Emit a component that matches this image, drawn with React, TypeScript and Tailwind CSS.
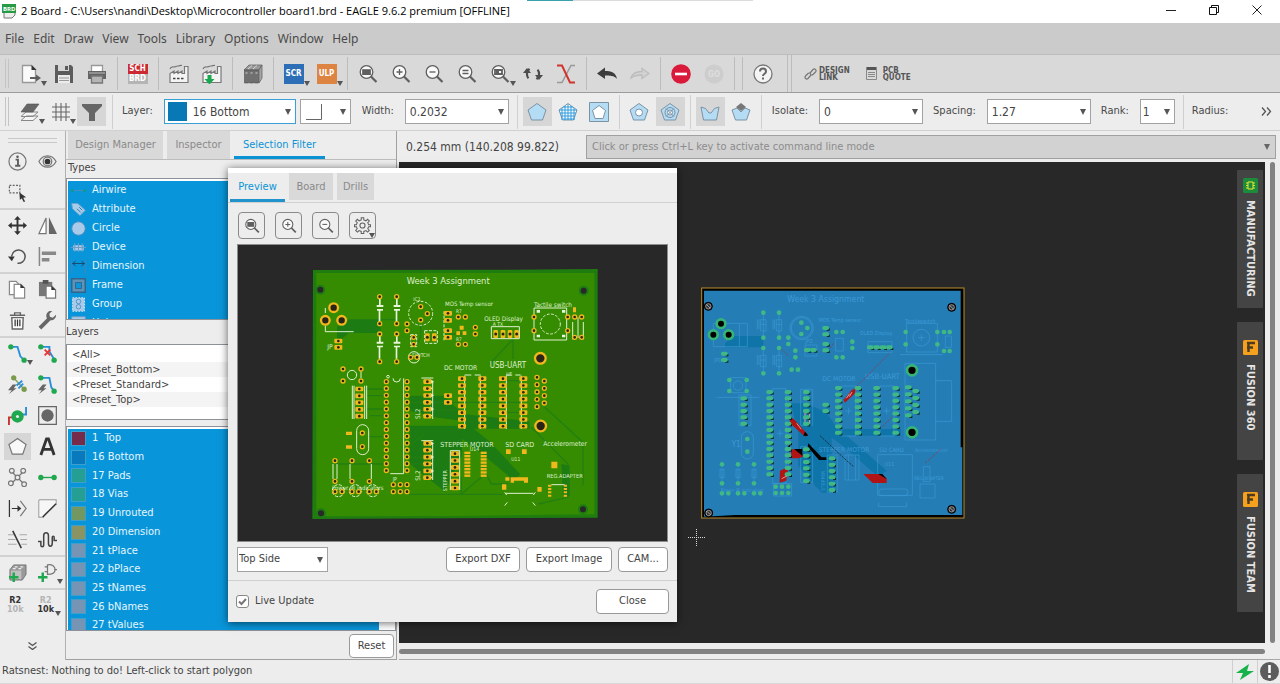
import React from "react";

type Kids = { children?: React.ReactNode };

const Ico = ({ children, s = 20 }: Kids & { s?: number }) => (
  <svg width={s} height={s} viewBox="0 0 20 20" fill="none" stroke="#5f5f5f" strokeWidth="1.3" className="shrink-0">
    {children}
  </svg>
);

const Tri = () => (
  <svg width="6" height="5" viewBox="0 0 6 5" className="pointer-events-none absolute right-0 bottom-1">
    <path d="M0 0h6L3 5z" fill="#555" />
  </svg>
);

/* ---------- shared icons ---------- */

const Lens = ({ children, s = 20 }: Kids & { s?: number }) => (
  <Ico s={s}>
    <circle cx="8.5" cy="8" r="6.3" fill="#fafafa" />
    <path d="M13 12.5l5.5 5.5" strokeWidth="2.2" />
    {children}
  </Ico>
);
const lensFit = <path d="M4.8 5.8h7.4v4.6H4.8z" fill="#5f5f5f" />;
const lensPlus = <path d="M5.5 8h6M8.5 5v6" />;
const lensMinus = <path d="M5.5 8h6" />;

const SheetIcon = () => (
  <Ico>
    <path d="M1.5 1.5h9l4 4v13h-13z" fill="#fafafa" stroke="#999" />
    <path d="M10.500 1v5h5z" fill="#333" stroke="none" />
    <path d="M9 14h6" strokeWidth="2" />
    <path d="M15 10.500l5 3.500-5 3.500z" fill="#5f5f5f" stroke="none" />
  </Ico>
);
const SaveIcon = () => (
  <Ico>
    <path d="M1 1h16l2 2v16H1z" fill="#5c5c5c" stroke="none" />
    <path d="M4 1h11v6H4z" fill="#d5d5d5" stroke="none" />
    <path d="M11 2h3v4h-3z" fill="#5c5c5c" stroke="none" />
    <path d="M4 11h12v8H4z" fill="#ececec" stroke="none" />
    <path d="M5 14h10M5 16.5h10" stroke="#999" strokeWidth="1" />
  </Ico>
);
const PrintIcon = () => (
  <Ico>
    <path d="M4.5 1.500h11v7h-11z" fill="#fff" stroke="#999" />
    <path d="M1 7h18v8H1z" fill="#646464" stroke="none" />
    <path d="M2 9h16" stroke="#aaa" />
    <path d="M4.500 12h11v7h-11z" fill="#b5b5b5" stroke="#777" />
  </Ico>
);
const Tag = ({ top, bottom, color }: { top: string; bottom?: string; color: string }) => (
  <span className={"flex size-5 flex-col items-center justify-center text-[8px] leading-[10px] font-bold text-white " + color}>
    <span>{top}</span>
    {bottom && <span className="w-full bg-[#b5b5b5] text-center">{bottom}</span>}
  </span>
);
const Factory = ({ green }: { green?: boolean }) => (
  <Ico>
    <path d="M1 18.500V9.500L5 7v2.500L9 7v2.500L13 7v2.500h2.500V2.500H19v16z" fill="#f4f4f4" stroke="#777" strokeWidth="1.200" />
    <path d="M1 5c1-3 3-2 4-2s2-1 4-1 2-1 4-.5" stroke="#777" strokeWidth="1.100" />
    {green ? (
      <path d="M5.500 11h4v4h3l-5 5.500-5-5.500h3z" fill="#18a850" stroke="none" />
    ) : (
      <path d="M4 14.500h2.500m1.500 0h2.500m1.500 0h2.500" stroke="#444" strokeWidth="1.600" />
    )}
  </Ico>
);
const Books = () => (
  <Ico>
    <path d="M1 6l5-5h13l-3 5z" fill="#999" stroke="#666" strokeWidth=".8" />
    <path d="M1.500 6H5.500v13H1.500zM6.500 6h4v13h-4zM11.500 6h4v13h-4z" fill="#707070" stroke="#4a4a4a" strokeWidth=".6" />
    <path d="M16 6l3-5v13l-3 5z" fill="#a5a5a5" stroke="#666" strokeWidth=".8" />
    <path d="M2.500 9h2M7.500 9h2M12.500 9h2M5 5l4-3.500M10 5l4-3.500" stroke="#ddd" strokeWidth=".9" />
  </Ico>
);
const Refresh = () => (
  <Ico>
    <path d="M4 12a6.500 6.500 0 0 1 5-8M16 8a6.500 6.500 0 0 1-5 8" strokeWidth="2.200" stroke="#4d4d4d" transform="rotate(-25 10 10)" />
    <path d="M0 9h8l-4-5zM12 11h8l-4 5z" fill="#4d4d4d" stroke="none" />
  </Ico>
);
const RatsIcon = () => (
  <Ico>
    <path d="M19 1.500h-4L6 18.500H1" stroke="#999" strokeWidth="1.500" />
    <path d="M1 1.500h5l8 17h5" stroke="#d0342c" strokeWidth="2" />
  </Ico>
);
const Undo = ({ redo }: { redo?: boolean }) => (
  <Ico>
    {redo ? (
      <path d="M19 9.500l-7-5v3C6 7.500 2 10 1 14c3-2.500 6-3 11-3v3.500z" stroke="#bdbdbd" fill="#d2d2d2" />
    ) : (
      <path d="M0 9.500l8-6v3.500c6 0 11 1.500 12 8-3-3.500-7-3.500-12-3.500v3.500z" fill="#3c3c3c" stroke="none" />
    )}
  </Ico>
);

/* ---------- top bars ---------- */

const TB = ({ label, drop, narrow, children }: Kids & { label: string; drop?: boolean; narrow?: boolean }) => (
  <button aria-label={label} className={"relative flex h-full shrink-0 items-center justify-center " + (narrow ? "w-[31px]" : "w-[33px]")}>
    {children}
    {drop && (
      <svg width="6" height="5" viewBox="0 0 6 5" className="absolute right-0 bottom-1.5">
        <path d="M0 0h6L3 5z" fill="#555" />
      </svg>
    )}
  </button>
);
const Sep = () => (
  <span className="flex h-full w-2 shrink-0 justify-center py-0.5">
    <span className="w-px bg-[#bcbcbc]" />
  </span>
);
const Grip = () => <span className="mx-[5px] my-1 w-1 shrink-0 self-stretch border-x border-[#c4c4c4]" />;

function TitleBar() {
  return (
    <header className="relative flex h-[23px] shrink-0 items-center bg-white pb-px font-['Open_Sans',sans-serif] text-[11px] text-black">
      <svg width="16" height="16" viewBox="0 0 16 16" className="mr-[3px] ml-0.5">
        <path d="M2 9v6h8l3-3V8z" fill="#eee" stroke="#777" />
        <path d="M0 1h14v9H0z" fill="#279a45" />
        <text x="1" y="8" fontSize="6" fontWeight="bold" fill="#fff">BRD</text>
      </svg>
      <h1>2 Board - C:\Users\nandi\Desktop\Microcontroller board1.brd - EAGLE 9.6.2 premium [OFFLINE]</h1>
      <span className="absolute top-0 left-[527px] h-px w-[46px] bg-[#3aa0ac]" />
      <span className="absolute top-0 left-[573px] h-px w-[180px] bg-[#dcdcdc]" />
      <div className="mr-0.5 ml-auto flex pb-0.5">
        <button aria-label="Minimize" className="flex w-[43px] justify-center">
          <svg width="10" height="10"><path d="M0 5.500h10" stroke="#222" /></svg>
        </button>
        <button aria-label="Restore" className="flex w-[43px] justify-center">
          <svg width="10" height="10" fill="none" stroke="#111"><path d="M.5 2.500h7v7h-7zM2.500 2.500v-2h7v7h-2" /></svg>
        </button>
        <button aria-label="Close window" className="flex w-[43px] justify-center">
          <svg width="10" height="10"><path d="M.5.5l9 9m0-9l-9 9" stroke="#222" /></svg>
        </button>
      </div>
    </header>
  );
}

function MenuBar() {
  const items = ["File", "Edit", "Draw", "View", "Tools", "Library", "Options", "Window", "Help"];
  return (
    <nav className="flex h-8 shrink-0 items-center gap-[9px] border-b border-[#bcbcbc] bg-[#cbcbcb] px-[5px] font-['Noto_Sans',sans-serif] text-[12px] text-[#4a4a4a]">
      {items.map((m) => (
        <button key={m}>{m}</button>
      ))}
    </nav>
  );
}

function MainToolbar() {
  return (
    <div className="flex h-[38px] shrink-0 items-center border-b border-[#9c9c9c] bg-[#d9d9d9]">
      <Grip />
      <TB label="Open" drop><SheetIcon /></TB>
      <TB label="Save"><SaveIcon /></TB>
      <TB label="Print"><PrintIcon /></TB>
      <Sep />
      <TB label="Schematic"><Tag top="SCH" bottom="BRD" color="bg-[#cc2a32]" /></TB>
      <Sep />
      <TB label="CAM processor"><Factory /></TB>
      <TB label="Manufacturing export"><Factory green /></TB>
      <Sep />
      <TB label="Library manager"><Books /></TB>
      <Sep />
      <TB label="Run script" drop><Tag top="SCR" color="bg-[#2d6fb7]" /></TB>
      <TB label="Run ULP" drop><Tag top="ULP" color="bg-[#dd8442]" /></TB>
      <Sep />
      <TB label="Zoom to fit"><Lens>{lensFit}</Lens></TB>
      <TB label="Zoom in"><Lens>{lensPlus}</Lens></TB>
      <TB label="Zoom out"><Lens>{lensMinus}</Lens></TB>
      <TB label="Redraw"><Lens><path d="M5.500 6.500h6m-6 3h6" /></Lens></TB>
      <TB label="Zoom select" drop><Lens><path d="M5 6h7v4H5zM6 8h3" strokeWidth="1.800" /></Lens></TB>
      <TB label="Refresh"><Refresh /></TB>
      <TB label="Ripup"><RatsIcon /></TB>
      <Sep />
      <TB label="Undo"><Undo /></TB>
      <TB label="Redo"><Undo redo /></TB>
      <Sep />
      <TB label="Stop">
        <Ico><circle cx="10" cy="10" r="9.800" fill="#da1a3a" stroke="none" /><path d="M4 10h12" stroke="#fff" strokeWidth="2.600" /></Ico>
      </TB>
      <TB label="Go">
        <Ico><circle cx="10" cy="10" r="9.500" fill="#cdcdcd" stroke="none" /><text x="4" y="13" fontSize="8" fontWeight="bold" fill="#dedede" stroke="none">GO</text></Ico>
      </TB>
      <Sep />
      <Sep />
      <TB label="Help">
        <Ico><circle cx="10" cy="10" r="9" fill="#f4f4f4" stroke="#777" /><path d="M7 7.500c0-4 6-4 6 0 0 2.500-3 2-3 4.500M10 13.500v2" stroke="#666" strokeWidth="2" /></Ico>
      </TB>
      <span className="mx-2 h-full w-[5px] shrink-0 border-x border-[#bcbcbc]" />
      <button className="ml-1 flex items-center gap-0.5 text-left text-[8px] leading-[7px] font-bold text-[#555]">
        <svg width="13" height="12" viewBox="0 0 13 12" fill="none" stroke="#777" strokeWidth="1.200">
          <path d="M6 5l3-3.500c2-1.500 4 1 2.500 2.500L9 6.500c-1 1-2 .5-3 0M7 7L4 10.500C2.500 12 0 10 1.500 8L4 5.500c1-1 2-.5 3 0" />
        </svg>
        <span>DESIGN<br />LINK</span>
      </button>
      <button className="ml-4 flex items-center gap-1.5 text-left text-[8px] leading-[7px] font-bold text-[#555]">
        <svg width="11" height="13" fill="none" stroke="#888"><path d="M0 1.500h11" strokeWidth="3" stroke="#555" /><path d="M.5 0v12.500h10V0M2 5.500h7m-7 2h7m-7 2h7" /></svg>
        <span>PCB<br />QUOTE</span>
      </button>
    </div>
  );
}

type PickProps = { label?: string; value: string; box: string; hidden?: string; kids?: React.ReactNode };
const Pick = ({ label, value, box, hidden, kids }: PickProps) => {
  const id = React.useId();
  return (
    <div className="flex shrink-0 items-center gap-[11px]">
      {label && <label htmlFor={id}>{label}</label>}
      <span className="relative flex items-center">
        {kids}
        <select id={id} aria-label={hidden} className={"h-[25px] appearance-none border bg-white text-[#444] outline-none " + box}>
          <option>{value}</option>
        </select>
        <svg width="6" height="6" viewBox="0 0 6 6" className="pointer-events-none absolute right-[5px]"><path d="M0 0h6L3 6z" fill="#555" /></svg>
      </span>
    </div>
  );
};

const PENTA = "M10 1.500l9 6.500-3.500 10h-11L1 8z";
const PB = ({ label, on, children }: Kids & { label: string; on?: boolean }) => (
  <button aria-label={label} className={"flex h-[29px] w-[29px] shrink-0 items-center justify-center " + (on ? "bg-[#d6d6d6]" : "")}>
    <svg width="20" height="20" viewBox="0 0 20 20" fill="#b5dcf5" stroke="#7c93a3">{children}</svg>
  </button>
);
const Bar = () => <span className="block h-[34px] w-px shrink-0 bg-[#cfcfcf]" />;

function ParamBar() {
  return (
    <div className="flex h-[38px] shrink-0 items-center overflow-hidden border-b border-[#d0d0d0] bg-[#ededed] text-[11px] text-[#4a4a4a]">
      <Grip />
      <TB label="Layer settings" drop narrow>
        <Ico>
          <path d="M1 18.500l5-4.500h12l-5 4.500zM1 14.500L6 10h12l-5 4.500z" fill="#f4f4f4" stroke="#888" strokeWidth="1" />
          <path d="M1 10l6-8h12l-6 8z" fill="#666" stroke="#555" strokeWidth=".6" />
        </Ico>
      </TB>
      <TB label="Grid" drop narrow>
        <Ico><path d="M5 1v18M10 1v18M15 1v18M1 5h18M1 10h18M1 15h18" stroke="#666" strokeWidth="1.100" /></Ico>
      </TB>
      <button aria-label="Selection filter" className="ml-px flex h-[29px] w-[29px] shrink-0 items-center justify-center bg-[#d6d6d6]">
        <Ico><path d="M0 2h20v2l-7 7v8H7v-8L0 4z" fill="#666" stroke="none" /></Ico>
      </button>
      <span className="mx-[6px]"><Bar /></span>
      <div className="flex items-center gap-1 pl-[3px]">
        <Pick
          label="Layer:"
          value="16 Bottom"
          box="w-[132px] border-[#3a9fd6] pl-7 text-[12px]"
          kids={<span className="pointer-events-none absolute left-1 size-[19px] bg-[#0879b4]" />}
        />
        <Pick
          hidden="Wire bend style"
          value=""
          box="w-[51px] border-[#a2a2a2]"
          kids={<svg width="18" height="16" className="pointer-events-none absolute left-1.5" fill="none" stroke="#666"><path d="M0 15.500h15.500V0" /></svg>}
        />
      </div>
      <div className="pr-2 pl-[11px]"><Pick label="Width:" value="0.2032" box="w-[104px] border-[#a2a2a2] pl-1 text-[12px]" /></div>
      <Bar />
      <div className="flex items-center gap-0.5 px-[5px]">
        <PB label="Solid pour" on><path d={PENTA} /></PB>
        <PB label="Hatch pour">
          <path d={PENTA} fill="#fff" />
          <path d="M4 6v12M7 4v14M10 2v16M13 4v14M16 6v12M1 8h18M2 11h16M3 14h14M5 17h11M5 5h10" stroke="#2d9be0" />
        </PB>
        <PB label="Cutout pour"><path d="M.5.500h19v19H.5z" /><path d="M10 3.500l6.500 5-2.500 8H6L3.500 8.500z" fill="#fff" /></PB>
      </div>
      <Bar />
      <div className="flex items-center gap-0.5 px-[5px]">
        <PB label="Thermals off"><path d={PENTA} /><circle cx="10" cy="10.500" r="3.500" fill="#fff" /></PB>
        <PB label="Thermals on" on>
          <path d={PENTA} /><circle cx="10" cy="10.500" r="5" fill="none" stroke="#7890a0" /><circle cx="10" cy="10.500" r="2.500" fill="#fff" />
          <path d="M6 6.500l8 8m0-8l-8 8" />
        </PB>
      </div>
      <Bar />
      <div className="flex items-center gap-0.5 px-[5px]">
        <PB label="Orphans off" on><path d="M1 5l4.500 1.500L9 11h2l3.500-4.500L19 5l-2.500 13h-13z" /></PB>
        <PB label="Orphans on"><path d="M1 8l5-2 4 4 4-4 5 2-3.500 10h-11z" /><path d="M10 1l5 4-5 4-5-4z" fill="#777" stroke="none" /></PB>
      </div>
      <Bar />
      <div className="flex items-center gap-2.5 pr-2 pl-2.5">
        <Pick label="Isolate:" value="0" box="w-[104px] border-[#a2a2a2] pl-1 text-[12px]" />
        <Pick label="Spacing:" value="1.27" box="w-[104px] border-[#a2a2a2] pl-1 text-[12px]" />
        <Pick label="Rank:" value="1" box="w-[35px] border-[#a2a2a2] pl-0.5 text-[12px]" />
      </div>
      <Bar />
      <span className="ml-2">Radius:</span>
      <button aria-label="More" className="mr-2 ml-auto">
        <svg width="11" height="9" fill="none" stroke="#555" strokeWidth="1.300"><path d="M1 .5l3.500 4-3.500 4M6 .5l3.500 4-3.500 4" /></svg>
      </button>
    </div>
  );
}

/* ---------- left tool palette ---------- */

const G = "#1fa84e";
const B = "#2a8fd8";
const dot = (x: number, y: number, c = G) => <circle key={x + "-" + y} cx={x} cy={y} r="2.800" fill={c} stroke="none" />;
const bolt = <path d="M5 10L0 16h4l-3 4 8-6H6l3-4z" fill="#666" stroke="none" />;

const tools: ([string, React.ReactNode, number?] | null)[][] = [
  [
    ["Info", <><circle cx="10" cy="10" r="9" stroke="#777" /><path d="M8 8h2.500v6M7.500 14.500h5.500" strokeWidth="2" /><circle cx="10" cy="5" r="1.300" fill="#555" stroke="none" /></>],
    ["Show", <><path d="M1 10c4-8 14-8 18 0-4 8-14 8-18 0z" stroke="#777" /><circle cx="10" cy="10" r="4.500" stroke="#777" /><circle cx="10" cy="10" r="3" fill="#333" stroke="none" /></>],
    ["Group", <><path d="M1.500 2.500h11v8h-11z" strokeDasharray="2 1.500" /><path d="M12 10l7 5-3 .5 2 4-1.500.5-2-4-2 2z" fill="#333" stroke="none" /></>],
    null,
  ],
  [
    ["Move", <><path d="M10 3v14M3 10h14" stroke="#333" strokeWidth="2" /><path d="M10 0l3.500 4h-7zM10 20l3.500-4h-7zM0 10l4-3.500v7zM20 10l-4-3.500v7z" fill="#333" stroke="none" /></>],
    ["Mirror", <><path d="M8.500 2v16.500H1z" fill="#fff" stroke="#777" /><path d="M11.500 1v18H20z" fill="#666" stroke="none" /></>],
    ["Rotate", <><path d="M4 10a7 7 0 1 1 6 7" stroke="#555" strokeWidth="1.600" /><path d="M0 10h7l-3 5z" fill="#333" stroke="none" /></>],
    ["Align", <><path d="M1.500 0v20" stroke="#888" strokeWidth="1.600" /><path d="M4 6.500h15M4 13.500h8" stroke="#888" strokeWidth="3.600" /></>],
  ],
  [
    ["Copy", <><path d="M1.500 1.500h7l3 3v11h-10z" fill="#fff" stroke="#888" /><path d="M6.500 4.500h7l4 4v10.500h-11z" fill="#fff" stroke="#888" /><path d="M13 4v4.500h4.500z" fill="#333" stroke="none" /></>],
    ["Paste", <><path d="M1 2h14v15H1z" fill="#777" stroke="none" /><path d="M5 0h6v4H5z" fill="#555" stroke="none" /><path d="M8.500 6.500h6l4 4V19h-10z" fill="#fff" stroke="#777" /><path d="M14 6v4.500h4.500z" fill="#333" stroke="none" /></>],
    ["Delete", <><path d="M2 4.500h16M7 4V2h6v2M4 7l.5 12h11L16 7z" fill="#fff" stroke="#666" strokeWidth="1.500" /><path d="M7.500 9v7M10 9v7M12.500 9v7" stroke="#333" /></>],
    ["Change", <><path d="M2 18L12 8" strokeWidth="4" stroke="#666" /><path d="M19 4l-3.500 3-3-1L12 3l3-3c-4-1-8 3-5.500 8 4 4 10 1 9.500-4z" fill="#666" stroke="none" /></>],
  ],
  [
    ["Route", <><path d="M3 3h7l3 10 4 4" stroke={B} strokeWidth="2" />{dot(3, 3)}{dot(17, 17)}</>, 1],
    ["Ripup", <><path d="M3 3h9v5l5 8" stroke={B} strokeWidth="2" />{dot(3, 3)}{dot(17, 17)}<path d="M7 6l6 6m0-6l-6 6" stroke="#e33" strokeWidth="2" /></>],
    ["Quick autoroute", <>{dot(6, 3, "#7a9b4a")}{dot(17, 15, "#7a9b4a")}<path d="M6 3l11 12" stroke="#7a9b4a" /><path d="M9 11l6-5m-4 8l5-5" stroke={B} strokeWidth="2" />{bolt}</>],
    ["Multi route", <><path d="M3 3h9l2 10 3 4" stroke={B} strokeWidth="2" />{dot(3, 3)}{dot(17, 17)}{bolt}</>],
    ["Via", <><path d="M1 20v-8h6" stroke="#c33" strokeWidth="2" /><path d="M13 9h6V1" stroke={B} strokeWidth="2" /><circle cx="10" cy="11" r="6.500" fill={G} stroke="none" /><circle cx="10" cy="11" r="1.600" fill="#eee" stroke="none" /></>],
    ["Hole", <><path d="M.7.700h18.600v18.600H.7z" stroke="#666" /><circle cx="10" cy="10" r="6.500" fill="#666" stroke="none" /></>],
    ["Polygon", <path d="M10 1.500l9 6.500-3.500 10h-11L1 8z" fill="#f8f8f8" stroke="#777" />, 2],
    ["Text", <path d="M3 19L9 2h2l6 17M5.500 13h9" stroke="#333" strokeWidth="3" />],
    ["Ratsnest", <><path d="M4 4l12 12M16 4L4 16" stroke="#777" />{[[4, 3], [16, 3], [3, 16], [17, 17], [10, 10]].map(([x, y]) => <circle key={x * 20 + y} cx={x} cy={y} r="2.500" fill="#eee" stroke="#777" />)}</>],
    ["Signal", <><path d="M3 10h14" stroke={G} strokeWidth="1.500" />{dot(3, 10)}{dot(17, 10)}</>],
    ["Split", <><path d="M1.500 1v18M4 10h9" stroke="#333" /><path d="M10 6.500l4 3.500-4 3.500z" fill="#333" stroke="none" /><path d="M13 2l6 8-6 8" stroke="#777" /></>],
    ["Miter", <><path d="M1 1v18h5M19 6V1H1" stroke="#999" /><path d="M1.500 1.500h17V6L6 18.500H1.500z" fill="#f6f6f6" stroke="none" /><path d="M5 19L19 5" stroke="#333" strokeWidth="1.600" /></>],
    ["Slice", <><path d="M0 5h7M0 10h8M0 15h9M12 5h8M13 10h7M14 15h6" stroke="#aaa" /><path d="M5 1l9 18" stroke="#333" strokeWidth="1.600" /></>],
    ["Meander", <path d="M0 12h3v4c0 2 3 2 3 0V6c0-4 5-4 5 0v8c0 4 4 4 4 0V8c0-2 2-2 2 0v3h3" stroke="#444" strokeWidth="1.600" />],
  ],
  [
    ["Add part", <><path d="M2 7l4-5h13v10l-4 6H2z" fill="#999" stroke="#666" strokeWidth=".8" /><path d="M3 8h11v9H3z" fill="#c0c0c0" stroke="none" /><path d="M7 4h3m3 0h3M5 6h3m3 0h3" stroke="#eee" /><path d="M6 10v10M1 15h10" stroke={G} strokeWidth="2.600" /></>],
    ["Add gate", <><path d="M10 2c5-1 8 2 8 5s-3 5-8 5V2zM7 4h3M7 9h3M17 7h3" stroke="#777" /><path d="M5 10v10M0 15h10" stroke={G} strokeWidth="2.600" /></>, 1],
  ],
];

function Palette() {
  return (
    <aside className="flex w-[66px] shrink-0 flex-col border-r border-[#b0b0b0] bg-[#ededed]">
      <span className="mx-2 mt-[7px] mb-[3px] h-[5px] shrink-0 border-y border-[#c8c8c8]" />
      {tools.map((group, i) => (
        <div key={i} className="grid shrink-0 grid-cols-2 border-b-2 border-[#d2d2d2] px-0.5">
          {group.map((t, j) =>
            t ? (
              <button key={j} aria-label={t[0]} className="relative flex h-[31px] items-center justify-center">
                <span className={t[2] === 2 ? "bg-[#d6d6d6] p-1" : ""}><Ico s={19}>{t[1]}</Ico></span>
                {t[2] === 1 && <Tri />}
              </button>
            ) : (
              <span key={j} />
            ),
          )}
        </div>
      ))}
      <div className="grid grid-cols-2 pr-1 text-[9px] leading-[9px] font-bold">
        <button className="py-1.5 text-[#333]">R2<br /><span className="text-[#b5b5b5]">10k</span></button>
        <button className="relative py-1.5 text-[#b5b5b5]">R2<br /><span className="text-[#333]">10k</span><Tri /></button>
      </div>
      <button aria-label="More tools" className="mx-auto mt-auto mb-2.5">
        <svg width="9" height="8" fill="none" stroke="#555" strokeWidth="1.300"><path d="M.5.500l4 3 4-3M.5 4.500l4 3 4-3" /></svg>
      </button>
    </aside>
  );
}

/* ---------- filter panel ---------- */

const types: [string, React.ReactNode][] = [
  ["Airwire", <><path d="M4 10h12" stroke="#3f8fc0" strokeWidth="1.500" /><path d="M0 10h4M16 10h4" stroke="#14978c" strokeWidth="3" /></>],
  ["Attribute", <><path d="M1 2h8l10 9-7 7L2 9z" fill="#a8cdea" stroke="#6fa5cc" /><path d="M8 9l5 5m-2-7l4 4" stroke="#3278a8" /></>],
  ["Circle", <circle cx="10" cy="10" r="9" fill="#a9cbe9" stroke="#4d90c0" />],
  ["Device", <><path d="M3 7h14v7H3z" fill="#a9cbe9" stroke="none" /><path d="M5 4v12M10 4v12M15 4v12M0 10h20" stroke="#6c9cc4" /></>],
  ["Dimension", <><path d="M1 1v18M19 1v18" stroke="#4587b8" /><path d="M2 6h16M6 3L2 6l4 3m8-6l4 3-4 3" stroke="#174b72" /></>],
  ["Frame", <><path d="M1 1h18v18H1z" fill="#5f93b8" stroke="#31658c" strokeWidth="2" /><path d="M6 6h8v8H6z" fill="#0b95da" stroke="#31658c" /></>],
  ["Group", <><path d="M2 1h16v18H2z" fill="#a9cbe9" stroke="#d2e7f6" strokeDasharray="2 2" /><circle cx="10" cy="6" r="3" stroke="#5694c4" /><circle cx="10" cy="13" r="3" stroke="#5694c4" /></>],
  ["Hole", <><path d="M1 1h18v18H1z" fill="#a9cbe9" stroke="#6c9cc4" /><circle cx="10" cy="10" r="6" fill="#31658c" stroke="none" /></>],
];
const layers: [string, string][] = [
  ["1  Top", "bg-[#772b4b]"],
  ["16 Bottom", "bg-[#0879bd]"],
  ["17 Pads", "bg-[#259f94]"],
  ["18 Vias", "bg-[#259f94]"],
  ["19 Unrouted", "bg-[#739760]"],
  ["20 Dimension", "bg-[#8a9463]"],
  ["21 tPlace", "bg-[#7695b5]"],
  ["22 bPlace", "bg-[#7695b5]"],
  ["25 tNames", "bg-[#7695b5]"],
  ["26 bNames", "bg-[#7695b5]"],
  ["27 tValues", "bg-[#7695b5]"],
];

function FilterPanel() {
  return (
    <section className="flex w-[331px] shrink-0 flex-col border-r border-b border-[#a0a0a0] bg-[#ededed] text-[11px] text-[#444]">
      <div className="flex h-[29px] shrink-0 gap-1 border-b border-[#bdbdbd] px-0.5 text-[#8a8a8a]">
        <button className="w-[95px] bg-[#d9d9d9]">Design Manager</button>
        <button className="w-[63px] bg-[#d9d9d9]">Inspector</button>
        <button className="w-[91px] border-b-3 border-[#0a94d6] pt-[3px] text-[#0a94d6]">Selection Filter</button>
      </div>
      <h2 className="h-[18px] shrink-0 pl-0.5 leading-4">Types</h2>
      <ul className="h-[142px] shrink-0 overflow-hidden border border-[#8c9298] bg-white pt-0.5 pr-4 pl-px text-[#e6f5fd]">
        {types.map(([name, icon]) => (
          <li key={name} className="flex h-[19px] items-center gap-1.5 bg-[#0995d9] pl-[3px]">
            <Ico s={15}>{icon}</Ico>
            {name}
          </li>
        ))}
      </ul>
      <h2 className="h-6 shrink-0 leading-6">Layers</h2>
      <ul className="h-[76px] shrink-0 border border-[#8c9298] bg-white pt-0.5 leading-[15px]">
        {["<All>", "<Preset_Bottom>", "<Preset_Standard>", "<Preset_Top>"].map((p) => (
          <li key={p} className="pl-[5px] even:bg-[#f4f4f4]">{p}</li>
        ))}
      </ul>
      <div className="mt-1.5 min-h-0 flex-1 overflow-hidden border border-[#8c9298] bg-white pt-0.5 pr-4 pl-px text-[#e6f5fd]">
        <ul className="flex h-[206px] flex-col bg-[#0995d9]">
          {layers.map(([name, c]) => (
            <li key={name} className="flex flex-1 items-center gap-1.5 whitespace-pre pl-[3px]">
              <span className={"size-[15px] border border-[#3f9fc9] " + c} />
              {name}
            </li>
          ))}
        </ul>
      </div>
      <div className="flex justify-end px-0.5 pt-[3px] pb-px">
        <button className="h-6 w-[45px] rounded-[4px] border border-[#999] bg-white">Reset</button>
      </div>
    </section>
  );
}

/* ---------- board drawings ---------- */

type Pt = [number, number];
const col = (x: number, y: number, n: number, d: number): Pt[] => Array.from({ length: n }, (_, i) => [x, y + i * d] as Pt);

const ovalPads: Pt[] = [
  ...col(598, 653, 6, 20.7), ...col(598, 838, 6, 20.6), ...col(702, 644, 8, 20.4), ...col(763, 644, 8, 20.4),
  ...col(825, 644, 8, 20.4), ...col(886, 644, 8, 20.4), ...col(394, 675, 5, 20.4), ...col(681, 869, 6, 20.6),
  ...col(660, 695, 2, 20), ...col(660, 448, 2, 21), ...col(660, 500, 2, 20), ...col(331, 531, 2, 19),
];
const tallPads: Pt[] = [[803, 510], [825, 510], [846, 510], [866, 510], [598, 520], [619, 520]];
const roundPads: Pt[] = [
  ...col(475, 653, 14, 20.5), ...col(537, 653, 14, 20.5), ...col(927, 640, 5, 22), ...col(949, 651, 4, 22),
  [345, 615], [399, 615], [345, 651], [399, 651], [403, 807], [403, 848],
  [321, 890], [372, 890], [424, 890], [321, 952], [372, 952], [424, 952],
  [321, 983], [342, 983], [372, 983], [392, 983], [424, 983], [445, 983],
  [496, 962], [517, 962], [537, 962], [496, 983], [517, 983], [537, 983],
  [455, 398], [506, 398], [455, 479], [506, 479], [455, 510], [506, 510], [455, 593], [506, 593],
  [578, 428], [598, 449], [578, 468], [537, 480], [537, 500], [691, 459], [712, 459], [742, 490], [742, 510],
  [691, 541], [712, 541], [918, 459], [1019, 459], [918, 500], [1019, 500], [1040, 459], [1061, 459],
  [1040, 520], [1061, 520], [557, 520], [557, 541], [548, 580], [567, 580],
];
const smdPads: Pt[] = [...col(718, 866, 8, 9.8), ...col(767, 866, 8, 9.8)];

const Y = "#f0b81c";
const K = "#282418";

function PreviewBoard() {
  return (
    <svg viewBox="30 243 1287 888" className="block w-full" role="img" aria-label="Board preview, top side">
      <path d="M255 318L853 317 1109 315V1061L680 1063 253 1065z" fill="#1f7d10" />
      <path d="M265 327h834v724L680 1056l-415 1z" fill="#358c00" />
      <g fill="#1c7b12">
        <path d="M362 467h96v40h-96l-35 30V488z" />
        <path d="M545 785h182l60 50 90 96-20 18-95-80-60-45v50l-52 110-10-10-95-75z" />
        <path d="M545 695h100l60 55 200 22v22H730l-30-24-80-10-75-20z" />
        <path d="M1000 900l25 5v90h-20z" />
      </g>
      <path
        d="M410 675h65M415 695h60M415 735h60M425 755h50M420 818h55M410 900h-80M545 715h330M545 738h160M545 991h280M950 730l115 105v130M785 600l70-75v60M910 790l110 110M578 480v40l-20 30M545 880h50M545 900h50M320 900h160M760 900l30 60h50M365 467h140M540 850l50-40M1020 900v100l-90 20M650 510h60M700 940v50l60-50M820 650h60M820 745h60"
        fill="none" stroke="#237f12" strokeWidth="4"
      />
      <g fill="#282828" stroke="#1f7a14" strokeWidth="6">
        {[[277, 377], [1067, 380], [279, 1048], [1065, 1036]].map(([x, y]) => <circle key={x * 3 + y} cx={x} cy={y} r="12" />)}
      </g>
      <g fill="none" stroke="#dff0cf" strokeWidth="3">
        <path d="M292 432v15M292 485v18h85M527 643v286h-40M710 635v160M757 635v160M835 635v160M880 635v160M710 633h20M740 633h18M834 633h16M862 633h16" />
        <path d="M373 665v100M378 665v100M410 665v100M416 665v100M580 830h36M580 642h36M614 650v115M614 838v110M667 860h28v118M667 860v118" />
        <path d="M790 488h84v36h-84zM918 432h98v96h-98zM1034 474v52M1066 474v52M1050 460v62" />
        <rect x="386" y="782" width="36" height="90" rx="18" />
        <path d="M315 900v45M327 900v45M366 900v45M430 900v45M832 988h84M830 1025l8-10M922 1025l-8-10M830 985l6 8M922 985l-6 8M970 962h40" />
        <path d="M399 622v20" />
        <circle cx="578" cy="448" r="36" strokeDasharray="8 5" />
        <circle cx="967" cy="480" r="30" strokeDasharray="8 5" />
        <circle cx="372" cy="633" r="14" />
        <path d="M495 643a11 11 0 0 0 22 0" />
        <circle cx="480" cy="638" r="4" />
        {[331, 382, 434].map((x) => <circle key={x} cx={x} cy="980" r="18" strokeDasharray="10 4" />)}
        <circle cx="558" cy="580" r="17" />
        <path d="M590 500h38v38h-38zM648 442v90M548 512h18v36h-18z" strokeDasharray="9 4" />
      </g>
      <g fill="#e8f4dc">
        {[[455, 440], [506, 440], [455, 550], [506, 550]].map(([x, y]) => (
          <path key={x + y} d={`M${x - 2} ${y - 35}h5v18h8v6h-20v-6h7zM${x - 8} ${y - 5}h18v5h-8v34h-5v-34h-5z`} />
        ))}
        {[653, 694, 735, 838, 879, 921].map((y) => <path key={y} d={`M606 ${y - 8}l12 8-12 8zM586 ${y + 18}h26v4h-26z`} />)}
        <path d="M926 438h10v8h-10zM1002 438h10v8h-10zM926 512h10v8h-10zM1002 512h10v8h-10z" />
      </g>
      <g fill="#dff0cf" fontFamily="'DejaVu Sans Condensed', sans-serif" fontSize="19">
        <text x="536" y="361" fontSize="28">Week 3 Assignment</text>
        <text x="651" y="427" fontSize="18">MOS Temp sensor</text>
        <text x="769" y="470">OLED Display</text>
        <text x="794" y="487" fontSize="15">A TX</text>
        <text x="918" y="428">Tactile switch</text>
        <text x="556" y="411" fontSize="15">IC1</text>
        <text x="648" y="618" fontSize="20">DC MOTOR</text>
        <text x="785" y="612" fontSize="24">USB-UART</text>
        <text x="637" y="848" fontSize="21">STEPPER MOTOR</text>
        <text x="832" y="848" fontSize="21">SD CARD</text>
        <text x="946" y="847" fontSize="20">Accelerometer</text>
        <text x="956" y="942" fontSize="17">REG.ADAPTER</text>
        <text x="312" y="978" fontSize="18">Power IR indicators</text>
        <text x="850" y="892" fontSize="15">U11</text>
        <text x="552" y="578" fontSize="15">SWITCH</text>
        <text x="298" y="555" fontSize="20">JP</text>
        <text x="576" y="765" transform="rotate(-90 576 765)">SL2</text>
        <text x="576" y="950" transform="rotate(-90 576 950)">SL2</text>
        <text x="657" y="982" transform="rotate(-90 657 982)" fontSize="16">STEPPER</text>
        <text x="494" y="950" fontSize="16">JP</text>
        <text x="684" y="447" fontSize="14">R7</text>
        <text x="684" y="532" fontSize="14">R7</text>
        <text x="835" y="636" fontSize="15">U5</text>
        <text x="725" y="862" fontSize="16">U14</text>
      </g>
      {ovalPads.map(([x, y], i) => <g key={i}><rect x={x - 12} y={y - 7} width="24" height="14" rx="3" fill={Y} /><circle cx={x} cy={y} r="4" fill={K} /></g>)}
      {tallPads.map(([x, y], i) => <g key={i}><rect x={x - 7} y={y - 12} width="14" height="24" rx="3" fill={Y} /><circle cx={x} cy={y} r="4.500" fill={K} /></g>)}
      {roundPads.map(([x, y], i) => <circle key={i} cx={x} cy={y} r="6" fill={K} stroke={Y} strokeWidth="4" />)}
      {smdPads.map(([x, y], i) => <rect key={i} x={x - 9} y={y - 3} width="18" height="7" fill={Y} />)}
      <path
        fill={Y}
        d="M695 485h12v12h-12zM685 502h11v11h-11zM704 502h11v11h-11zM1035 430h9v15h-9zM834 856h14v14h-14zM882 856h14v14h-14zM354 803h18v10h-18zM354 844h18v10h-18zM822 961h13v16h-13zM928 969h13v14h-13zM832 940h12v10h-12zM848 940h50v10h-50zM848 950h10v6h-10zM888 940h12v16h-12zM970 893h18v20h-18zM960 962h10v6h-10zM960 972h10v6h-10zM960 982h10v6h-10zM960 992h10v6h-10zM1007 962h10v6h-10zM1007 972h10v6h-10zM1007 982h10v6h-10zM1007 992h10v6h-10z"
      />
      {([[317, 431, 13], [292, 469, 13], [341, 469, 13], [937, 583, 16], [938, 786, 16]] as const).map(([x, y, r]) => (
        <circle key={x + y} cx={x} cy={y} r={r} fill={K} stroke={Y} strokeWidth="7" />
      ))}
    </svg>
  );
}

const layoutPads: Pt[] = [
  ...col(240, 336, 14, 19), ...col(295, 336, 14, 19), ...col(350, 336, 6, 19), ...col(350, 508, 6, 19),
  ...col(446, 324, 8, 19.2), ...col(505, 324, 8, 19.2), ...col(561, 324, 8, 19.2), ...col(618, 324, 8, 19.2),
  ...col(162, 355, 5, 19), ...col(427, 535, 6, 19), ...col(656, 322, 5, 21), ...col(678, 333, 4, 21),
  [408, 374], [408, 393], [104, 221], [104, 240], [408, 144], [408, 163], [408, 192], [408, 211],
  [542, 202], [561, 202], [580, 202], [599, 202], [353, 210], [371, 210],
];
const layoutRound: Pt[] = [
  [220, 98], [267, 98], [220, 173], [267, 173], [220, 204], [267, 204], [220, 280], [267, 280],
  [334, 128], [352, 144], [334, 162], [295, 173], [295, 192], [439, 156], [458, 156], [487, 185], [487, 204],
  [439, 232], [458, 232], [316, 212], [316, 232], [305, 269], [324, 269],
  [118, 300], [170, 300], [118, 333], [170, 333], [172, 477], [172, 515],
  [96, 553], [144, 553], [192, 553], [96, 610], [144, 610], [192, 610],
  [96, 640], [115, 640], [144, 640], [163, 640], [192, 640], [211, 640],
  [257, 620], [276, 620], [295, 620], [257, 639], [276, 639], [295, 639],
  [762, 156], [779, 156], [762, 213], [779, 213], [647, 156], [742, 156], [647, 193], [742, 193],
];

function LayoutBoard() {
  return (
    <svg viewBox="0 0 855 750" width="285" height="250" className="absolute top-[118px] left-[291px]" role="img" aria-label="Board layout">
      <rect x="35" y="24" width="787" height="690" fill="#000" stroke="#b98e2c" strokeWidth="3" />
      <path d="M42 32h770v470h5v203H135l-93 5z" fill="#257db5" />
      <g fill="#0f74a8">
        <path d="M105 190l25-22h90v34H105z" />
        <path d="M303 370h40l65 25 35 52h190v20H470l120 105-25 18-110-95-30-22v165h-30l-70-80v-95z" />
        <path d="M375 480l60 50v90h-60z" />
      </g>
      <g fill="none" stroke="#3b9ad5" strokeWidth="2">
        <path d="M70 130h102v70H70zM148 130v70M645 250h92v230h-92zM737 302h48v122h-48M563 524h104v122H563zM248 326h40v285h-40zM332 328h36v108h-36zM332 500h36v108h-36zM147 345h36v92h-36zM412 525h30v112h-30zM455 318h42v150h-42zM570 318h42v150h-42zM534 185h72v33h-72zM650 130h92v86h-92zM80 352h128M630 224h128M566 668v12h84v-12M345 195h36v33h-36zM122 293h46v45h-46zM250 610h55v38h-55z" />
        <rect x="154" y="455" width="36" height="82" rx="18" />
        <rect x="566" y="627" width="88" height="20" rx="10" />
        <circle cx="335" cy="144" r="35" /><circle cx="335" cy="144" r="31" />
        <circle cx="694" cy="173" r="25" /><circle cx="144" cy="317" r="14" />
        <path d="M684 173h20M694 163v20M466 393h20M476 383v20M580 393h20M590 383v20M260 460h20M270 450v20M96 565v40M144 565v40M192 565v40M465 525h42v75h-42zM475 525v75M497 525v75M690 612h45v42h-45zM700 560h20v45h-20z" />
        <path d="M90 568h12v25H90zM138 568h12v25h-12zM186 568h12v25h-12zM766 168h18v34h-18zM436 175h24v38h-24z" />
        {[[220, 133], [267, 133], [220, 240], [267, 240]].map(([x, y]) => (
          <path key={x + y} d={`M${x - 8} ${y - 14}h16v34h-16zM${x - 8} ${y}h16M${x} ${y - 30}v62M${x - 18} ${y - 15}v30M${x - 13} ${y - 15}v30`} />
        ))}
      </g>
      <g fill="#3b9ad5" fontFamily="'DejaVu Sans Condensed', sans-serif" fontSize="16">
        <text x="292" y="65" fontSize="26">Week 3 Assignment</text>
        <text x="386" y="127">MOS Temp sensor</text>
        <text x="510" y="165">OLED Display</text>
        <text x="645" y="130">Tactileswitch</text>
        <text x="397" y="302" fontSize="20">DC MOTOR</text>
        <text x="525" y="296" fontSize="23">USB-UART</text>
        <text x="386" y="517" fontSize="20">STEPPER MOTOR</text>
        <text x="568" y="517" fontSize="18">SD CARD</text>
        <text x="675" y="516" fontSize="15">Accelerometer</text>
        <text x="672" y="600" fontSize="14">REG.ADAPTER</text>
        <text x="92" y="635" fontSize="15">Power IR indicators</text>
        <text x="405" y="632" fontSize="15" transform="rotate(-90 405 632)">STEPPER</text>
        <text x="584" y="557">U11</text>
        <text x="125" y="500" fontSize="24">Y1</text>
        <text x="72" y="245">JP1</text>
        <text x="346" y="190">JP2</text>
      </g>
      <g fill="#b01414">
        <path d="M300 410l12 8 42 46-8 6-46-40zM303 508h30l6 22-14 5h-22zM270 572l25-12-6 42-20 6zM520 582h55l15 14v13h-42zM461 360l24-30 12-5-2 15-30 28z" />
      </g>
      <path d="M345 455l10 12h-15zM312 507h25v20zM355 490l40 42h14v8h-22l-34-40zM565 582h12l14 16zM300 490v15h-8z" fill="#000" />
      <g fill="none" strokeWidth="2">
        <path d="M460 360l140-142M705 550l50-45M577 440l33-33M430 190l-12 18M272 205l24 24" stroke="#973346" strokeDasharray="8 3" />
        <path d="M390 467l80 75 20 17" stroke="#111" strokeDasharray="7 3" />
        <path d="M469 355l10-14M478 350l8-14M320 430l14 18M345 398h14v32h-14zM275 596l16-8" stroke="#e59a9a" strokeWidth="3" />
      </g>
      {layoutPads.map(([x, y], i) => (
        <g key={i}><rect x={x + 2} y={y + 1} width="9" height="7" fill="#04221f" /><rect x={x - 11} y={y - 6} width="20" height="12" rx="5" fill="#3fb886" /></g>
      ))}
      {layoutRound.map(([x, y], i) => <circle key={i} cx={x} cy={y} r="7" fill="#3fb886" />)}
      {([[93, 131, 13], [70, 164, 13], [116, 164, 13], [666, 271, 15], [666, 457, 15]] as const).map(([x, y, r]) => (
        <circle key={x + y} cx={x} cy={y} r={r} fill="#000" stroke="#36b477" strokeWidth="8" />
      ))}
      {[[55, 79], [785, 82], [56, 699], [785, 688]].map(([x, y]) => (
        <g key={x + y}><circle cx={x} cy={y} r="12" fill="#111" stroke="#000" strokeWidth="3" /><circle cx={x} cy={y} r="8" fill="#333" stroke="#ccc" strokeWidth="2" /><path d={`M${x - 5} ${y - 5}l10 10`} stroke="#ddd" strokeWidth="2" /></g>
      ))}
    </svg>
  );
}

/* ---------- canvas area ---------- */

const SideTab = ({ label, fusion }: { label: string; fusion?: boolean }) => (
  <button className={"flex h-[138px] w-[26px] items-center rounded-[1px] bg-[#444] text-[11px] font-bold text-[#e4e4e4] [writing-mode:vertical-rl] " + (fusion ? "gap-[9px] pt-[18px]" : "gap-[7px] pt-2")}>
    {fusion ? (
      <svg width="15" height="15"><rect width="15" height="15" rx="1.500" fill="#f5a11e" /><path d="M4 3h8M4 7.500h6M5.500 3v9" stroke="#4b3b22" strokeWidth="2.400" /></svg>
    ) : (
      <svg width="15" height="15"><rect width="15" height="15" rx="1.500" fill="#1c8c3c" /><path d="M3 5h9M3 7.500h9M3 10h9" stroke="#d6df2a" /><path d="M5 4h5v7H5z" fill="#1c8c3c" stroke="#f0e630" /></svg>
    )}
    <span>{label}</span>
  </button>
);

function Workspace() {
  return (
    <section className="flex min-w-0 flex-1 flex-col bg-[#ededed] pl-0.5 text-[11px]">
      <div className="flex h-[31px] shrink-0 items-center pr-1 pl-[7px] text-[#444]">
        <span className="w-[180px] shrink-0 text-[12px] whitespace-nowrap">0.254 mm (140.208 99.822)</span>
        <label className="relative flex flex-1 items-center">
          <input
            aria-label="Command line"
            placeholder="Click or press Ctrl+L key to activate command line mode"
            className="h-6 w-full border border-[#a0a0a0] bg-[#d2d2d2] px-[5px] outline-none placeholder:text-[#8c8c8c]"
          />
          <svg width="6" height="6" viewBox="0 0 6 6" className="absolute right-1.5"><path d="M0 0h6L3 6z" fill="#666" /></svg>
        </label>
      </div>
      <div className="flex min-h-0 flex-1">
        <div className="relative flex min-w-0 flex-1 justify-end overflow-hidden bg-[#282828]">
          <LayoutBoard />
          <svg width="18" height="18" className="absolute top-[367px] left-[289px]">
            <path d="M0 8.500h18M8.500 0v18" stroke="#ddd" strokeDasharray="1 1" />
          </svg>
          <div className="flex flex-col gap-[14px] pt-2 pr-0.5">
            <SideTab label="MANUFACTURING" />
            <SideTab label="FUSION 360" fusion />
            <SideTab label="FUSION TEAM" fusion />
          </div>
        </div>
        <div className="w-[15px] px-[5px]"><div className="h-full rounded-full bg-[#828282]" /></div>
      </div>
      <div className="shrink-0 border-b border-[#a8a8a8] pt-1.5 pr-[15px] pb-[5px]"><div className="h-[5px] rounded-full bg-[#828282]" /></div>
    </section>
  );
}

/* ---------- preview dialog ---------- */

const DB = ({ label, children, drop }: Kids & { label: string; drop?: boolean }) => (
  <button aria-label={label} className="relative flex size-[27px] items-center justify-center rounded-[4px] border border-[#8a8a8a]">
    {children}
    {drop && <svg width="6" height="5" className="absolute right-0 bottom-0"><path d="M0 0h6L3 5z" fill="#555" /></svg>}
  </button>
);
const Push = ({ children, w }: Kids & { w: string }) => (
  <button className={"h-[25px] rounded-[4px] border border-[#999] bg-white " + w}>{children}</button>
);

function PreviewDialog() {
  return (
    <div role="dialog" aria-label="Manufacturing preview" className="absolute top-[168px] left-[228px] flex w-[449px] flex-col border-t-5 border-white bg-[#ededed] text-[11px] text-[#444] shadow-[0_1px_8px_rgba(0,0,0,0.6)]">
      <div className="flex h-[30px] gap-1 border-b border-[#d0d0d0] px-0.5 text-[#8a8a8a]">
        <button className="w-[55px] border-b-3 border-[#2093cd] pt-[3px] text-[#0a94d6]">Preview</button>
        <button className="mb-0.5 w-11 bg-[#d9d9d9] pt-0.5">Board</button>
        <button className="mb-0.5 w-[37px] bg-[#d9d9d9] pt-0.5">Drills</button>
      </div>
      <div className="flex gap-2.5 px-2.5 pt-[9px] pb-[5px]">
        <DB label="Fit preview"><Lens s={16}>{lensFit}</Lens></DB>
        <DB label="Zoom in preview"><Lens s={16}>{lensPlus}</Lens></DB>
        <DB label="Zoom out preview"><Lens s={16}>{lensMinus}</Lens></DB>
        <DB label="Preview settings" drop>
          <Ico s={17}>
            <circle cx="10" cy="10" r="3" />
            <path d="M8.500 1h3v2.500l2.500 1 2-1.800 2 2-1.800 2 1 2.300H19.500v2.500H17.200l-1 2.300 1.800 2-2 2-2-1.800-2.500 1v2.500h-3v-2.500l-2.500-1-2 1.800-2-2 1.800-2-1-2.300H.5V9h2.300l1-2.300L2 4.700l2-2 2 1.800 2.500-1z" strokeWidth="1.200" />
          </Ico>
        </DB>
      </div>
      <div className="mx-[9px] border border-[#8c8c8c] bg-[#282828]"><PreviewBoard /></div>
      <div className="flex items-center border-b border-[#d0d0d0] px-[9px] pt-[5px] pb-2">
        <Pick hidden="Board side" value="Top Side" box="w-[91px] border-[#a2a2a2] pl-px text-[11px]" />
        <div className="ml-auto flex gap-[6px]">
          <Push w="w-[74px]">Export DXF</Push>
          <Push w="w-[86px]">Export Image</Push>
          <Push w="w-[50px]">CAM...</Push>
        </div>
      </div>
      <div className="flex items-center justify-between px-2 pt-2 pb-2">
        <label className="flex items-center gap-1.5">
          <span className="relative flex size-[13px]">
            <input type="checkbox" defaultChecked className="peer size-[13px] appearance-none rounded-[3px] border border-[#888] bg-white" />
            <svg width="13" height="13" fill="none" className="pointer-events-none invisible absolute peer-checked:visible"><path d="M3 6.500L5.500 9 10 4" stroke="#777" strokeWidth="2" /></svg>
          </span>
          Live Update
        </label>
        <Push w="w-[73px]">Close</Push>
      </div>
    </div>
  );
}

export default function App() {
  return (
    <div className="relative flex h-screen min-h-[640px] flex-col overflow-hidden bg-[#ededed] font-['DejaVu_Sans_Condensed','Noto_Sans',sans-serif] select-none">
      <TitleBar />
      <MenuBar />
      <MainToolbar />
      <ParamBar />
      <main className="flex min-h-0 flex-1">
        <Palette />
        <FilterPanel />
        <Workspace />
      </main>
      <footer className="flex h-6 shrink-0 items-center border-b border-[#d9d9d9] bg-[#ededed] pl-0.5 text-[11px] text-[#444]">
        <span>Ratsnest: Nothing to do! Left-click to start polygon</span>
        <div className="ml-auto flex h-full items-center">
          <button aria-label="Connection" className="flex h-full w-[25px] items-center justify-center border-l border-[#cfcfcf]">
            <svg width="18" height="16" viewBox="0 0 18 16"><path d="M13 0L0 9h7l-3 7 14-9h-7z" fill="#18b24b" /></svg>
          </button>
          <button aria-label="Notifications" className="flex h-full w-[23px] items-center justify-center border-l border-[#cfcfcf]">
            <svg width="19" height="19"><circle cx="9.500" cy="9.500" r="9.500" fill="#5c5c5c" /><path d="M9.500 3v8M9.500 13v3" stroke="#fff" strokeWidth="2.600" /></svg>
          </button>
        </div>
      </footer>
      <PreviewDialog />
    </div>
  );
}
